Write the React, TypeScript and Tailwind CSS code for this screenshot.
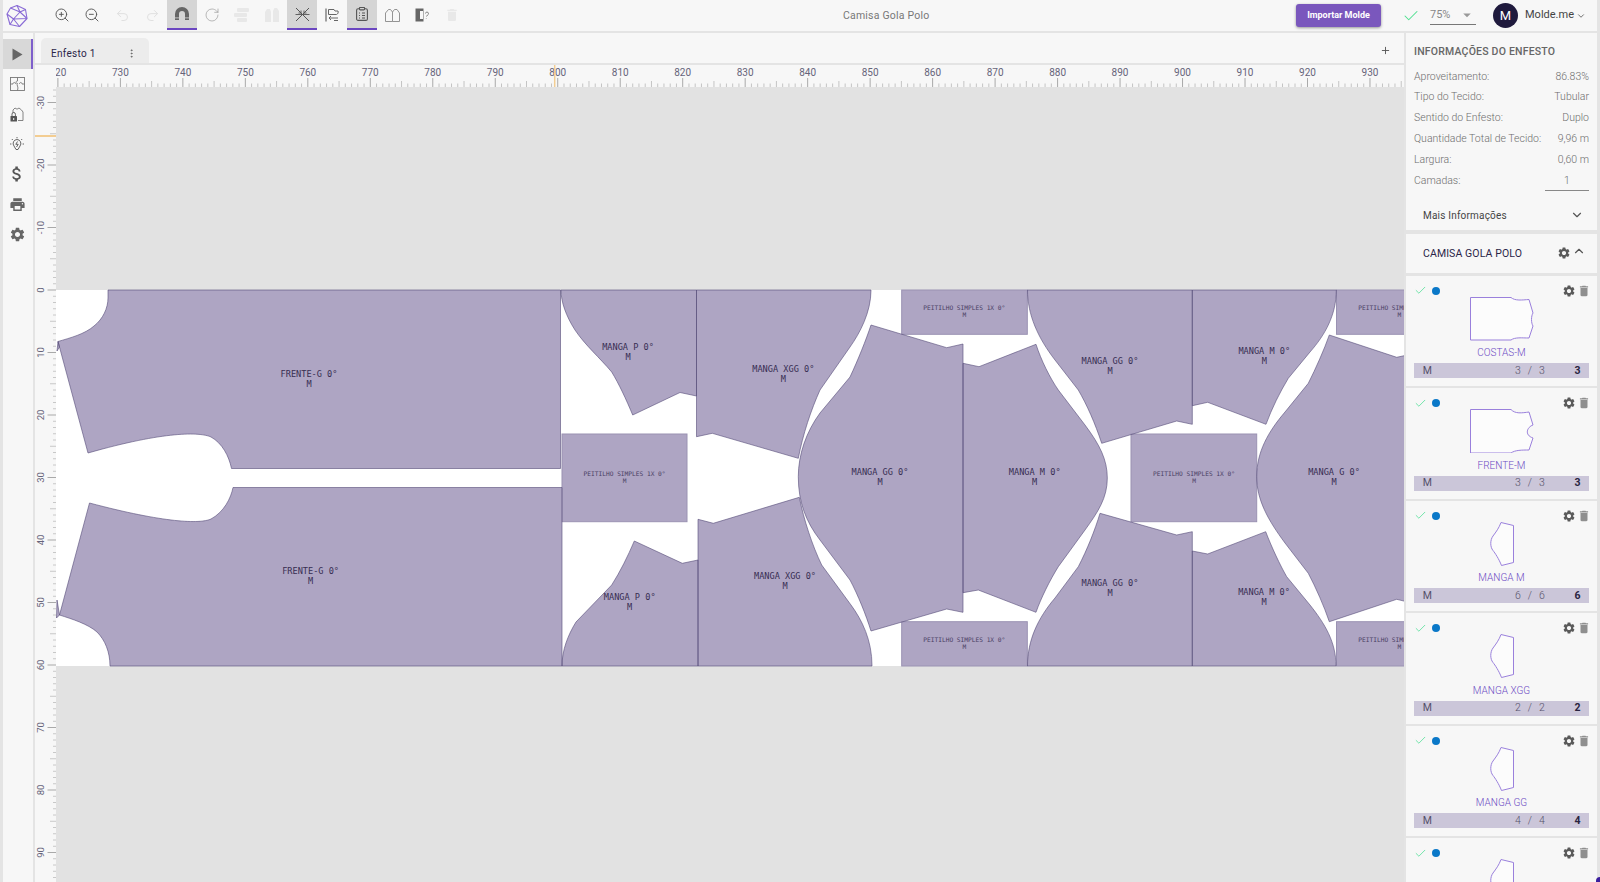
import React from 'react'
import {
  ZoomIn,
  ZoomOut,
  Undo2,
  Redo2,
  RotateCw,
  Check,
  ChevronDown,
  ChevronUp,
  Plus,
  EllipsisVertical,
} from 'lucide-react'
import { MdSettings, MdDelete, MdPrint, MdAttachMoney, MdArrowDropDown } from 'react-icons/md'

const FILL = '#aea5c3'

const pieces = [
  // frente
  'M108 290 H560.5 V468.5 H231.5 C229 456 222 443 211 437 C200 432 165 431 88 453 L58 341.5 C70 338 85 334 94 326 C103 319 108 308 108 298 Z',
  'M58 341.5 L57 351 L59.5 347 Z',
  'M110 666 H562 V487.5 H233 C231 498 224 512 211 519 C200 524 165 523 89.5 503 L59.5 615 C72 619 88 624 97 632 C105 640 110 652 110 666 Z',
  'M59.5 615 L57 600 L56.5 618 Z',
  // mangas
  'M561 290 H696.5 V396 L680 392.5 L632.7 415 C626 399 619 384 611.7 372 C600 358 585 345 575 330 C566 316 561 302 561 290 Z',
  'M696.5 290 H871 C871 312 860 333 850 347 L820 390 C811 410 803 434 798.3 458.3 L712.3 433.3 L696.5 436.7 Z',
  'M871 325 L946.7 347.7 L963 344 V612.3 L946.7 609 L871 631 C866 615 858 595 850 580 L820 540 C806 522 798.3 502 798.3 476.7 C798.3 455 806 432 820 413 L850 377 C858 360 866 340 871 325 Z',
  'M698 519.3 L713.3 523.3 L799.3 497.3 C804 520 812 545 821.7 565 L851 605 C862 620 872 640 872 666 H698 Z',
  'M562 666 C562 650 568 635 576 622 L611.7 585 C620 572 628 556 634.3 541 L682.3 563.3 L698 560 V666 Z',
  'M963 363.3 L979 366.7 L1036 344.3 C1041 360 1050 378 1058.3 390 L1085 425 C1100 445 1107.3 460 1107.3 478 C1107.3 498 1098 512 1085 530 L1058.3 566.7 C1050 580 1041 598 1036 612.3 L978.3 590 L963 592.7 Z',
  'M1027.5 290 H1192.3 V424.3 L1176.7 421 L1101.7 443.3 C1095 423 1087 405 1078.3 390 L1055 360 C1038 338 1027.5 315 1027.5 290 Z',
  'M1027.5 666 C1027.5 640 1038 618 1055 598 L1078.3 566.7 C1087 550 1095 530 1100 513.3 L1176.7 535 L1192.3 531.7 V666 Z',
  'M1192.3 290 H1336.3 C1336.3 315 1325 335 1310 352 L1288.3 378.3 C1280 392 1272 408 1266 424.3 L1207.7 402.3 L1192.3 405.7 Z',
  'M1192.3 551 L1207.7 554 L1265.7 531.7 C1272 548 1280 565 1286.7 576.7 L1310 605 C1325 624 1336 642 1336 666 H1192.3 Z',
  'M1329.3 335 L1396.7 357.3 L1412 354 V603 L1396.7 599.3 L1329.3 621.7 C1324 606 1316 588 1308.3 573.3 L1285 543 C1268 520 1256.7 500 1256.7 476.7 C1256.7 452 1268 432 1285 412 L1308.3 383.3 C1316 368 1324 350 1329.3 335 Z',
]

const peitilhos = [
  { x: 562, y: 434, w: 125, h: 87.7, tx: 624.6, ty: 474.3 },
  { x: 901.7, y: 290, w: 125.6, h: 44.3, tx: 964.3, ty: 308 },
  { x: 901.7, y: 621.7, w: 125.6, h: 44.3, tx: 964.3, ty: 640 },
  { x: 1131, y: 434, w: 125.7, h: 87.7, tx: 1194, ty: 474.3 },
  { x: 1336.5, y: 290, w: 80, h: 44.3, tx: 1399.3, ty: 308 },
  { x: 1336.5, y: 621.7, w: 80, h: 44.3, tx: 1399.3, ty: 640 },
]

const labels = [
  { t: 'FRENTE-G 0°', x: 309, y: 374 },
  { t: 'FRENTE-G 0°', x: 310.6, y: 571 },
  { t: 'MANGA P 0°', x: 628, y: 347.7 },
  { t: 'MANGA P 0°', x: 629.7, y: 597.7 },
  { t: 'MANGA XGG 0°', x: 783.3, y: 369 },
  { t: 'MANGA XGG 0°', x: 785, y: 576 },
  { t: 'MANGA GG 0°', x: 880, y: 472.7 },
  { t: 'MANGA M 0°', x: 1034.7, y: 472.7 },
  { t: 'MANGA GG 0°', x: 1110, y: 361.7 },
  { t: 'MANGA GG 0°', x: 1110, y: 583.3 },
  { t: 'MANGA M 0°', x: 1264.3, y: 351.7 },
  { t: 'MANGA M 0°', x: 1264, y: 592.7 },
  { t: 'MANGA G 0°', x: 1334, y: 472.7 },
]

const Marker = () => (
  <svg viewBox="56 87 1348 795" width="1348" height="795" className="block" fontFamily="'DejaVu Sans Mono', monospace">
    <rect x="56" y="290" width="1348" height="376" fill="#ffffff" />
    {pieces.map((d, i) => (
      <path key={i} d={d} fill={FILL} />
    ))}
    {peitilhos.map((p, i) => (
      <rect key={i} x={p.x} y={p.y} width={p.w} height={p.h} fill={FILL} stroke="#9a92b2" strokeWidth="1" />
    ))}
    {/* outlines drawn with opacity so that shared edges come out darker */}
    {pieces.map((d, i) => (
      <path key={i} d={d} fill="none" stroke="#554b78" strokeOpacity="0.6" strokeWidth="1" />
    ))}
    {peitilhos.map((p, i) => (
      <g key={i} fontSize="6.2" fill="#4a4063" textAnchor="middle" dominantBaseline="middle">
        <text x={p.tx} y={p.ty}>PEITILHO SIMPLES 1X 0°</text>
        <text x={p.tx} y={p.ty + 7.2}>M</text>
      </g>
    ))}
    {labels.map((l, i) => (
      <g key={i} fontSize="8.6" fill="#372d52" textAnchor="middle" dominantBaseline="middle">
        <text x={l.x} y={l.y}>{l.t}</text>
        <text x={l.x} y={l.y + 10}>M</text>
      </g>
    ))}
  </svg>
)

const HRuler = () => {
  const step = 6.248
  const ticks = Array.from({ length: 217 }, (_, i) => i)
  return (
    <svg width="1348" height="22" className="block" fontFamily="Roboto, sans-serif">
      {ticks.map((i) => {
        const x = 1.9 + i * step
        const major = i % 10 === 0
        const mid = i % 5 === 0
        return <line key={i} x1={x} x2={x} y1={major ? 13 : mid ? 16 : 18.5} y2="22" stroke={major ? '#a9a9a9' : '#c4c4c4'} strokeWidth="1" />
      })}
      {Array.from({ length: 22 }, (_, i) => (
        <text key={i} x={1.9 + i * 62.48} y="11" fontSize="10" fill="#66647a" textAnchor="middle">
          {720 + i * 10}
        </text>
      ))}
      <line x1="498.7" x2="498.7" y1="0" y2="22" stroke="#f3cd92" strokeWidth="1.5" />
    </svg>
  )
}

const VRuler = () => {
  const step = 6.25
  const ticks = Array.from({ length: 128 }, (_, i) => i - 32)
  const rows = [-30, -20, -10, 0, 10, 20, 30, 40, 50, 60, 70, 80, 90]
  return (
    <svg width="21" height="795" className="block" fontFamily="Roboto, sans-serif">
      <line x1="0" x2="21" y1="49" y2="49" stroke="#f3cd92" strokeWidth="2" />
      {ticks.map((v) => {
        const y = 203 + v * step
        const major = v % 10 === 0
        const mid = v % 5 === 0
        return <line key={v} x1={major ? 12.5 : mid ? 15 : 18} x2="21" y1={y} y2={y} stroke={major ? '#a9a9a9' : '#c8c8c8'} strokeWidth="1" />
      })}
      {rows.map((v) => {
        const y = 203 + v * step
        return (
          <text key={v} x="6" y={y} fontSize="9.5" fill="#66647a" textAnchor="middle" transform={`rotate(-90 6 ${y})`} dominantBaseline="middle">
            {v}
          </text>
        )
      })}
    </svg>
  )
}

const Logo = () => (
  <svg width="22" height="24" viewBox="0 0 22 24" fill="none" stroke="#8a6cd6" strokeWidth="1.1" strokeLinejoin="round">
    <path d="M11 1.5 L19.5 5.5 L21 14.5 L13.5 22.5 L4 20.5 L1 10 L4.5 4 Z" />
    <path d="M4.5 4 L14 8 L19.5 5.5 M14 8 L21 14.5 M14 8 L7.5 15 L1 10 M7.5 15 L13.5 22.5 M7.5 15 L21 14.5 M7.5 15 L4 20.5 M11 1.5 L14 8" />
  </svg>
)

const MagnetIcon = () => (
  <svg width="16" height="14" viewBox="0 0 16 14" fill="#666">
    <path d="M1 13 V7 A7 7 0 0 1 15 7 V13 H11 V7 A3 3 0 0 0 5 7 V13 Z" />
    <rect x="1" y="10.5" width="4" height="0.8" fill="#d5d5d5" />
    <rect x="11" y="10.5" width="4" height="0.8" fill="#d5d5d5" />
  </svg>
)

const BlocksIcon = () => (
  <svg width="16" height="14" viewBox="0 0 16 14" fill="#e8e8e8">
    <rect x="3" y="0" width="12" height="4" rx="1" />
    <rect x="0" y="5" width="13" height="4" rx="1" />
    <rect x="3" y="10" width="10" height="4" rx="1" />
  </svg>
)

const ShirtsIcon = () => (
  <svg width="14" height="14" viewBox="0 0 14 14" fill="#e8e8e8">
    <path d="M0 4 L2 1 H5 L6 4 V14 H0 Z" />
    <path d="M8 3 L9.5 0 H12 L14 3 V14 H8 Z" />
  </svg>
)

const CrossIcon = () => (
  <svg width="15" height="15" viewBox="0 0 15 15" fill="none" stroke="#555" strokeWidth="1">
    <path d="M1 1 L6 6 M14 1 L9 6 M1 14 L14 1 M1 1 L14 14" />
    <path d="M6 3.5 V6 H3.5 M9 3.5 V6 H11.5 M0.5 7.5 H14.5" strokeWidth="0.9" />
  </svg>
)

const AlignIcon = () => (
  <svg width="14" height="14" viewBox="0 0 14 14" fill="none" stroke="#666" strokeWidth="1">
    <path d="M1 0.5 V13.5" strokeWidth="1.2" />
    <path d="M3.5 1.5 H9 L10 3 H13 C13.5 4.5 13 6 11.5 6.5 H3.5 Z" />
    <path d="M13 10 H4 M6 8 L4 10 L6 12 M9 12.5 H13" />
  </svg>
)

const ClipboardIcon = () => (
  <svg width="12" height="14" viewBox="0 0 12 14" fill="none" stroke="#555" strokeWidth="1.1">
    <rect x="0.6" y="1.8" width="10.8" height="11.6" rx="1.5" />
    <rect x="3.5" y="0.5" width="5" height="2.4" rx="0.6" fill="#d5d5d5" />
    <path d="M3 6 H4 M6 6 H9 M3 8.5 H4 M6 8.5 H9 M3 11 H4 M6 11 H9" />
  </svg>
)

const BookIcon = () => (
  <svg width="15" height="13" viewBox="0 0 15 13" fill="none" stroke="#888" strokeWidth="0.9" strokeLinejoin="round">
    <path d="M7.5 3 L5.5 0.5 H3.5 L0.5 4 V12.5 H7.5 Z" />
    <path d="M7.5 3 L9.5 0.5 H12 L14.5 4 V12.5 H7.5" />
  </svg>
)

const DoorIcon = () => (
  <svg width="14" height="14" viewBox="0 0 14 14" fill="none">
    <path d="M0.5 0.5 H8.5 V13.5 H0.5 Z" fill="#666" />
    <path d="M5 3 H8 V11 H5 Z" fill="#f7f7f7" />
    <path d="M10.5 5.5 A1.5 1.5 0 1 1 12.5 7 L11.5 8.5 M11.3 10.5 V11" stroke="#777" strokeWidth="0.9" />
  </svg>
)

const CursorIcon = () => (
  <svg width="11" height="13" viewBox="0 0 11 13" fill="#666" className="ml-[1px]">
    <path d="M0.5 0.5 L10.5 6.5 L0.5 12.5 Z" />
  </svg>
)

const PuzzleIcon = () => (
  <svg width="15" height="14" viewBox="0 0 15 14" fill="none" stroke="#777" strokeWidth="0.9">
    <rect x="0.5" y="0.5" width="14" height="13" />
    <path d="M7.5 0.5 V4 C5.5 4 5.5 6.5 7.5 6.5 C6 8 9 9.5 7.5 13.5 M0.5 7 H3 C3 5 5.5 5 5.5 7 M9.5 7 C9.5 5 12 5 12 7 H14.5" />
  </svg>
)

const LockShirtIcon = () => (
  <svg width="14" height="15" viewBox="0 0 14 15" fill="none" stroke="#777" strokeWidth="0.9">
    <path d="M3 6 V3 L5 1 L7 2.2 L9 1 L11.5 3 L13 5 V13.5 H8" />
    <rect x="0.5" y="9" width="6.5" height="5.5" rx="0.6" fill="#555" stroke="none" />
    <path d="M2 9 V7.2 A1.7 1.7 0 0 1 5.4 7.2 V9" stroke="#555" />
    <rect x="3.2" y="11" width="1" height="2" fill="#f7f7f7" stroke="none" />
  </svg>
)

const BulbIcon = () => (
  <svg width="14" height="14" viewBox="0 0 14 14" fill="none" stroke="#555" strokeWidth="0.9">
    <path d="M7 2.5 A4 4 0 0 1 10 9 L8 12.5 H6 L4 9 A4 4 0 0 1 7 2.5 Z" />
    <path d="M7.5 4.5 L5.8 7.3 H8.2 L6.5 10" />
    <path d="M7 0 V1.3 M1.8 2 L2.8 3 M12.2 2 L11.2 3 M0 7 H1.4 M12.6 7 H14" />
  </svg>
)

const toolbar: { icon: React.ReactNode; active?: boolean }[] = [
  { icon: <ZoomIn size={16} color="#555" strokeWidth={1.4} /> },
  { icon: <ZoomOut size={16} color="#555" strokeWidth={1.4} /> },
  { icon: <Undo2 size={15} color="#e0e0e0" strokeWidth={1.6} /> },
  { icon: <Redo2 size={15} color="#e0e0e0" strokeWidth={1.6} /> },
  { icon: <MagnetIcon />, active: true },
  { icon: <RotateCw size={16} color="#999" strokeWidth={1} /> },
  { icon: <BlocksIcon /> },
  { icon: <ShirtsIcon /> },
  { icon: <CrossIcon />, active: true },
  { icon: <AlignIcon /> },
  { icon: <ClipboardIcon />, active: true },
  { icon: <BookIcon /> },
  { icon: <DoorIcon /> },
  { icon: <MdDelete size={16} color="#e8e8e8" /> },
]

const sideItems: React.ReactNode[] = [
  <CursorIcon />,
  <PuzzleIcon />,
  <LockShirtIcon />,
  <BulbIcon />,
  <MdAttachMoney size={20} color="#555" />,
  <MdPrint size={17} color="#666" />,
  <MdSettings size={17} color="#666" />,
]

const info = [
  ['Aproveitamento:', '86.83%'],
  ['Tipo do Tecido:', 'Tubular'],
  ['Sentido do Enfesto:', 'Duplo'],
  ['Quantidade Total de Tecido:', '9,96 m'],
  ['Largura:', '0,60 m'],
]

const costas = 'M0.5 0.5 H41 C45 4 52 3 59 2.5 L63 16 C61 19 61 26 63 29 L59 41 C52 41 45 40 41 43 H0.5 Z'
const frente = 'M0.5 0.5 H41 C45 5 52 4 59 3 L63 16 C57 18 54 26 63 29 L59 41 C52 41 45 41 41 44 H0.5 Z'
const manga = 'M11 0.5 L23.5 3.5 V40.5 L11.5 43.5 C9 37 5 31 3 28.5 C0 25 0 18 3 14 C6 10 9 6 11 0.5 Z'

const cards = [
  { name: 'COSTAS-M', path: costas, w: 64, qty: 3 },
  { name: 'FRENTE-M', path: frente, w: 64, qty: 3 },
  { name: 'MANGA M', path: manga, w: 24, qty: 6 },
  { name: 'MANGA XGG', path: manga, w: 24, qty: 2 },
  { name: 'MANGA GG', path: manga, w: 24, qty: 4 },
  { name: 'MANGA G', path: manga, w: 24, qty: 4 },
]

const PieceCard = ({ name, path, w, qty }: { name: string; path: string; w: number; qty: number }) => (
  <div className="h-[110.5px] shrink-0 bg-[#f7f7f7] px-2 flex flex-col">
    <div className="h-[21px] flex items-center justify-between pt-[9px]">
      <div className="flex items-center gap-[5px]">
        <Check size={13} color="#55e09a" strokeWidth={1.5} />
        <span className="w-2 h-2 rounded-full bg-[#0a78c8]" />
      </div>
      <div className="flex items-center gap-[1px] -mr-[1.5px]">
        <MdSettings size={14} color="#5a5a5a" />
        <MdDelete size={14} color="#8f8f8f" />
      </div>
    </div>
    <div className="h-[44px] flex justify-center">
      <svg width={w} height="44" viewBox={`0 0 ${w} 44`} fill="#fcfcfc" stroke="#9a80dc" strokeWidth="1">
        <path d={path} />
      </svg>
    </div>
    <div className="h-[22.7px] pt-[2px] flex items-center justify-center text-[10px] font-light text-[#6d4cc4]">{name}</div>
    <div className="h-[15.3px] bg-[#cbc6d9] flex items-center text-[10.5px] pl-[8.7px] pr-[8.5px]">
      <span className="text-[#56516a] w-[92.3px]">M</span>
      <span className="text-[#56516a] flex gap-[7px] font-light">
        <span>{qty}</span>
        <span>/</span>
        <span>{qty}</span>
      </span>
      <span className="ml-auto font-bold text-[#2a2440]">{qty}</span>
    </div>
  </div>
)

export default function App() {
  return (
    <div className="w-[1600px] h-[882px] overflow-hidden relative bg-[#e4e4e4] flex flex-col [font-family:Roboto,sans-serif]">
      <header className="h-[31px] shrink-0 mx-[3px] pr-[11px] bg-[#f7f7f7] flex items-center">
        <div className="w-[44px] pl-[3px] flex items-center">
          <Logo />
        </div>
        <div className="flex h-full">
          {toolbar.map((t, i) => (
            <div
              key={i}
              className={
                t.active
                  ? 'w-[30px] h-[30px] flex items-center justify-center bg-[#d5d5d5] border-b-2 border-[#6b46c1]'
                  : 'w-[30px] h-[30px] flex items-center justify-center'
              }
            >
              {t.icon}
            </div>
          ))}
        </div>
        <div className="flex-1 pl-[376px] text-[10.5px] tracking-[0.2px] text-[#777]">Camisa Gola Polo</div>
        <button className="w-[85px] h-[23px] rounded-[3px] bg-[#7a57bd] text-white text-[9px] font-bold shadow-[0_1px_3px_rgba(0,0,0,0.4)]">
          Importar Molde
        </button>
        <Check size={18} color="#4fe08f" strokeWidth={1.4} className="ml-[21px]" />
        <div className="ml-[10px] w-[46px] h-[18px] border-b border-[#777] flex items-center justify-between text-[11px] text-[#888]">
          <span>75%</span>
          <MdArrowDropDown size={18} color="#999" />
        </div>
        <div className="ml-[17px] w-[25px] h-[25px] rounded-full bg-[#1f1a3d] text-white text-[13px] flex items-center justify-center">M</div>
        <span className="ml-[7px] w-[46px] text-[11px] text-[#444] whitespace-nowrap">Molde.me</span>
        <ChevronDown size={10} color="#555" className="ml-[5px]" />
      </header>

      <div className="flex-1 flex pt-[2px] min-h-0">
        <aside className="w-[30px] ml-[3px] shrink-0 bg-[#f7f7f7] pt-[6px] flex flex-col">
          {sideItems.map((icon, i) => (
            <div
              key={i}
              className={
                i === 0
                  ? 'h-[30px] flex items-center justify-center bg-[#d8d8d8] border-r-2 border-[#7e5fcb]'
                  : 'h-[30px] flex items-center justify-center pr-[2px]'
              }
            >
              {icon}
            </div>
          ))}
        </aside>

        <main className="w-[1369px] ml-[2px] shrink-0 flex flex-col min-h-0">
          <div className="h-[30px] shrink-0 bg-[#f7f7f7] pl-[6px] pr-[13px] flex items-end justify-between">
            <div className="w-[108px] h-[25px] rounded-t-[5px] bg-[#ececec] pl-[10px] pr-[12px] pt-[6px] flex items-center justify-between text-[10px] tracking-[0.3px] text-[#2b2548]">
              <span>Enfesto 1</span>
              <EllipsisVertical size={11} color="#666" />
            </div>
            <Plus size={11} color="#555" className="mb-[7px]" />
          </div>
          <div className="h-[22px] mt-[2px] shrink-0 bg-[#f7f7f7] flex overflow-hidden">
            <div className="w-[21px] shrink-0" />
            <HRuler />
          </div>
          <div className="flex-1 flex min-h-0 overflow-hidden">
            <div className="w-[21px] shrink-0 bg-[#f7f7f7]">
              <VRuler />
            </div>
            <div className="flex-1 bg-[#e2e2e2] overflow-hidden">
              <Marker />
            </div>
          </div>
        </main>

        <aside className="w-[191px] ml-[2px] shrink-0 flex flex-col min-h-0 overflow-hidden">
          <section className="h-[197px] shrink-0 bg-[#f7f7f7] px-2 pt-[12px]">
            <h2 className="text-[10.5px] font-medium text-[#666] leading-[14px] tracking-[0.2px]">INFORMAÇÕES DO ENFESTO</h2>
            <div className="mt-[7px] flex flex-col text-[10.5px] font-light text-[#6e6e6e]">
              {info.map(([k, v]) => (
                <div key={k} className="h-[20.8px] flex items-center justify-between">
                  <span>{k}</span>
                  <span>{v}</span>
                </div>
              ))}
              <div className="h-[20.8px] flex items-center justify-between">
                <span>Camadas:</span>
                <span className="w-[44px] h-[18px] mt-[3px] border-b border-[#888] text-center">1</span>
              </div>
            </div>
            <div className="mt-[17px] pl-[9px] pr-[5px] flex items-center justify-between text-[10px] tracking-[0.2px] text-[#444]">
              <span>Mais Informações</span>
              <ChevronDown size={14} color="#555" />
            </div>
          </section>
          <section className="h-[39px] mt-[4px] shrink-0 bg-[#f7f7f7] pl-[17px] pr-[11px] flex items-center justify-between">
            <span className="text-[10.5px] tracking-[0.1px] text-[#2b2548]">CAMISA GOLA POLO</span>
            <div className="flex items-center gap-[1px] -mt-[2px]">
              <MdSettings size={14} color="#5a5a5a" />
              <ChevronUp size={14} color="#555" className="-mt-[3px]" />
            </div>
          </section>
          <div className="mt-[2.5px] flex flex-col gap-[2px]">
            {cards.map((c) => (
              <PieceCard key={c.name} {...c} />
            ))}
          </div>
        </aside>
      </div>
      <div className="absolute right-0 bottom-0 w-[4px] h-[5px] rounded-tl-[4px] bg-[#3b1f9e]" />
    </div>
  )
}
